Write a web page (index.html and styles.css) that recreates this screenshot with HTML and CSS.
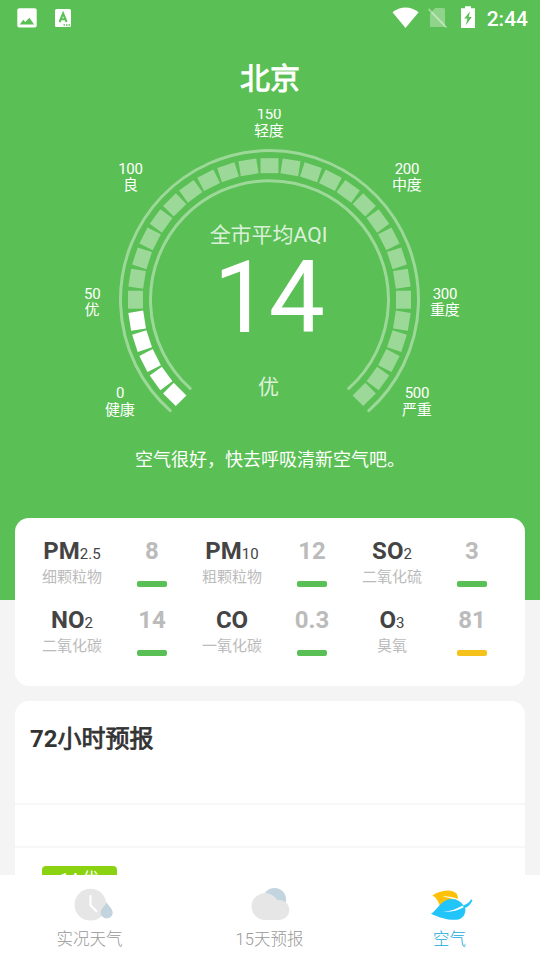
FILE: index.html
```html
<!DOCTYPE html>
<html lang="zh-CN">
<head>
<meta charset="utf-8">
<title>北京 空气</title>
<link rel="stylesheet" href="styles.css">
</head>
<body>
<main class="content">
  <div class="status">
    <svg class="status-left" width="60" height="24" viewBox="15 6 60 24">
      <rect x="17.3" y="8.2" width="19.4" height="19.4" rx="2" fill="#fff"/>
      <path d="M19.8 24.4l3.400-4.700 2 2.300 4.200-4.200 4.700 6.600z" class="cut"/>
      <rect x="55" y="9" width="16" height="18" rx="1.5" fill="#fff"/>
      <path d="M59.6 22l3.500-8.500 3.500 8.500M61 19.300h4.200" class="cut-line"/>
      <path d="M63.500 25h1.500M66 25h1.500M68.500 25h1.500" class="cut-dots"/>
    </svg>
    <svg class="status-right" width="88" height="26" viewBox="390 5 88 26">
      <path d="M392.500 12.200C400 5.800 411 5.800 418.600 12.200L405.500 28z" fill="#fff"/>
      <path d="M435 8h8.500q1.500 0 1.500 1.500V27h-15V14z" fill="#fff" opacity=".33"/>
      <path d="M428.500 9l18 18.500" stroke="#fff" stroke-width="1.800" opacity=".4"/>
      <path d="M461 8.300h4V6.300h6v2h4V28h-14z" fill="#fff"/>
      <path d="M470 11.500l-5.800 7h3.200l-1.600 6.800 6-8.300h-3.200z" class="cut"/>
    </svg>
    <span class="clock">2:44</span>
  </div>
  <h1 class="city">北京</h1>
  <svg class="gauge" width="540" height="321" viewBox="0 109 540 321">
    <g class="rings">
      <path d="M170.200 410.700A149 149 0 1 1 368.800 410.700"/>
      <path d="M190.200 388.400A119 119 0 1 1 348.800 388.400"/>
    </g>
    <g id="ticks"></g>
    <g class="scale">
      <text x="120" y="398">0</text><text x="119.700" y="415">健康</text>
      <text x="92.300" y="299">50</text><text x="92" y="315">优</text>
      <text x="130.500" y="174">100</text><text x="130.500" y="190">良</text>
      <text x="269" y="119">150</text><text x="268.700" y="136">轻度</text>
      <text x="407" y="174">200</text><text x="406.700" y="190">中度</text>
      <text x="445" y="299">300</text><text x="444.700" y="315">重度</text>
      <text x="417" y="398">500</text><text x="416.700" y="415">严重</text>
    </g>
    <text class="caption" x="268.500" y="242">全市平均AQI</text>
    <text class="aqi" x="268.800" y="332">14</text>
    <text class="caption" x="268.500" y="394">优</text>
  </svg>
  <p class="advice">空气很好，快去呼吸清新空气吧。</p>
  <section class="card pollutants">
    <div class="name"><b>PM</b><small>2.5</small><p>细颗粒物</p></div><div class="value">8<i></i></div>
    <div class="name"><b>PM</b><small>10</small><p>粗颗粒物</p></div><div class="value">12<i></i></div>
    <div class="name"><b>SO</b><small>2</small><p>二氧化硫</p></div><div class="value">3<i></i></div>
    <div class="name"><b>NO</b><small>2</small><p>二氧化碳</p></div><div class="value">14<i></i></div>
    <div class="name"><b>CO</b><p>一氧化碳</p></div><div class="value">0.3<i></i></div>
    <div class="name"><b>O</b><small>3</small><p>臭氧</p></div><div class="value">81<i class="moderate"></i></div>
  </section>
  <section class="card forecast">
    <h2><b>72</b>小时预报</h2>
    <div class="band"></div>
    <div class="hours"><span class="badge">14 优</span></div>
  </section>
</main>
<nav class="tabs">
  <a class="tab">
    <svg width="50" height="40" viewBox="65 885 50 40">
      <circle cx="90.500" cy="904.700" r="15.900" fill="#e6e6e6"/>
      <path d="M90.500 896v9.300l6 6" fill="none" stroke="#fff" stroke-width="2.200" stroke-linecap="round"/>
      <path d="M106.700 902.500c2 3.200 6 6.500 6 10a6 6 0 0 1-12 0c0-3.500 4-6.800 6-10z" fill="#c2d4dd"/>
    </svg>
    <span>实况天气</span>
  </a>
  <a class="tab">
    <svg width="50" height="40" viewBox="245.500 885 50 40">
      <circle cx="275" cy="899.500" r="11.500" fill="#c2d4dd"/>
      <path d="M265.200 920a13.500 13.500 0 1 1 12.300-19.700A10 10 0 1 1 279 920z" fill="#e6e6e6"/>
    </svg>
    <span>15天预报</span>
  </a>
  <a class="tab active">
    <svg width="50" height="40" viewBox="425 885 50 40">
      <path d="M432.300 895.500C439 890.500 451 888 456.500 893.500C458 896 458 897.500 457.600 899C453 896.800 448 896 442.500 896.200C447 897.500 452 898.500 456.500 900L440 906C438 901 436.500 897.500 432.300 895.500z" fill="#ffc107"/>
      <path d="M431 913.700C437 910 440 902 448 899.500C455 897.500 461 901 463.500 905.500C467 904 469.500 902 471.300 899.200L472.500 900.200C471 904 468.500 906.500 465.200 907.800C466 913 464 917 460 919C452 921.500 440 918 431 913.700z" fill="#22c5fa"/>
      <path d="M443 911.700C451 911.200 457 909 462.500 905.600L463.800 907.300C457 910.800 451 912.300 443 911.700z" fill="#fff"/>
    </svg>
    <span>空气</span>
  </a>
</nav>
<script src="gauge.js"></script>
</body>
</html>
```
FILE: styles.css
```css
* { box-sizing: border-box; margin: 0; padding: 0; }
body {
  width: 540px; height: 960px; overflow: hidden;
  display: flex; flex-direction: column;
  font-family: Roboto, "Noto Sans CJK SC", sans-serif;
  background: #fff;
}
.content {
  height: 875px; overflow: hidden; flex: none;
  display: flex; flex-direction: column;
  background: linear-gradient(#5abf54 600px, #f4f4f4 600px);
}
.status { height: 37px; flex: none; display: flex; padding: 6px 12px 0 15px; color: #fff; }
.status-right { margin: -1px 8px 0 auto; }
.clock { font-size: 21px; font-weight: 500; line-height: 27px; width: 42px; text-align: right; }
.cut { fill: #5abf54; }
.cut-line { fill: none; stroke: #5abf54; stroke-width: 2; }
.cut-dots { stroke: #5abf54; stroke-width: 1.5; }
.city { height: 72px; flex: none; text-align: center; color: #fff; font-size: 30px; line-height: 83px; font-weight: 400; -webkit-text-stroke: 0.9px #fff; }
.gauge { display: block; flex: none; overflow: hidden; }
.gauge text { fill: #fff; text-anchor: middle; }
.rings { fill: none; stroke: #fff; stroke-opacity: .4; stroke-width: 3; stroke-linecap: round; }
.tick { fill: #fff; fill-opacity: .4; }
.tick.lit { fill-opacity: 1; }
.scale { font-size: 15px; letter-spacing: -0.2px; }
.gauge .caption { font-size: 21px; fill-opacity: .8; }
.gauge .aqi { font-size: 100px; letter-spacing: -1px; }
.advice { height: 88px; flex: none; padding-left: 135px; color: #fff; font-size: 18px; line-height: 60px; }
.card { width: 510px; margin: 0 15px 15px; border-radius: 14px; background: #fff; flex: none; }
.pollutants {
  height: 168px; padding: 19px 13px 0 17px;
  display: grid; grid-template-columns: repeat(6, 80px); grid-auto-rows: 69px;
  text-align: center;
}
.name { color: #444; line-height: 28px; white-space: nowrap; }
.name b { font-size: 24px; }
.name small { font-size: 15px; }
.name p { color: #bbb; font-size: 15px; line-height: 19px; }
.value { display: flex; flex-direction: column; align-items: center; gap: 16px; color: #bbb; font-size: 24px; font-weight: 700; line-height: 28px; }
.value i { width: 30px; height: 6px; border-radius: 2px; background: #5abf54; }
.value .moderate { background: #f5c21b; }
.forecast { height: 300px; }
.forecast h2 { height: 102px; padding-left: 15px; color: #333; font-size: 24px; line-height: 76px; font-weight: 400; -webkit-text-stroke: 0.8px #333; }
.forecast h2 b { font-weight: 700; -webkit-text-stroke: 0; }
.band { height: 45px; border: solid #f7f7f7; border-width: 2px 0; }
.hours { padding: 18px 27px; }
.badge { display: block; width: 75px; height: 24px; border-radius: 4px; background: #8bd210; color: #fff; text-align: center; font-size: 16.500px; line-height: 27px; }
.tabs { height: 85px; flex: none; display: flex; background: #fff; }
.tab { width: 180px; display: flex; flex-direction: column; align-items: center; padding: 10px 1px 0 0; color: #999; font-size: 16.500px; line-height: 30px; font-weight: 300; }
.tab.active { color: #20a8dc; }
.tab svg { display: block; margin-left: 1px; }
```
FILE: gauge.js
```js
const group = document.getElementById("ticks");
const level = 5;
for (let i = 0; i < 31; i++) {
  const r = document.createElementNS("http://www.w3.org/2000/svg", "rect");
  r.setAttribute("x", 260.5);
  r.setAttribute("y", 158.2);
  r.setAttribute("width", 18);
  r.setAttribute("height", 15);
  r.setAttribute("transform", `rotate(${-135 + i * 9} 269.5 299.7)`);
  r.setAttribute("class", i < level ? "tick lit" : "tick");
  group.appendChild(r);
}
```
